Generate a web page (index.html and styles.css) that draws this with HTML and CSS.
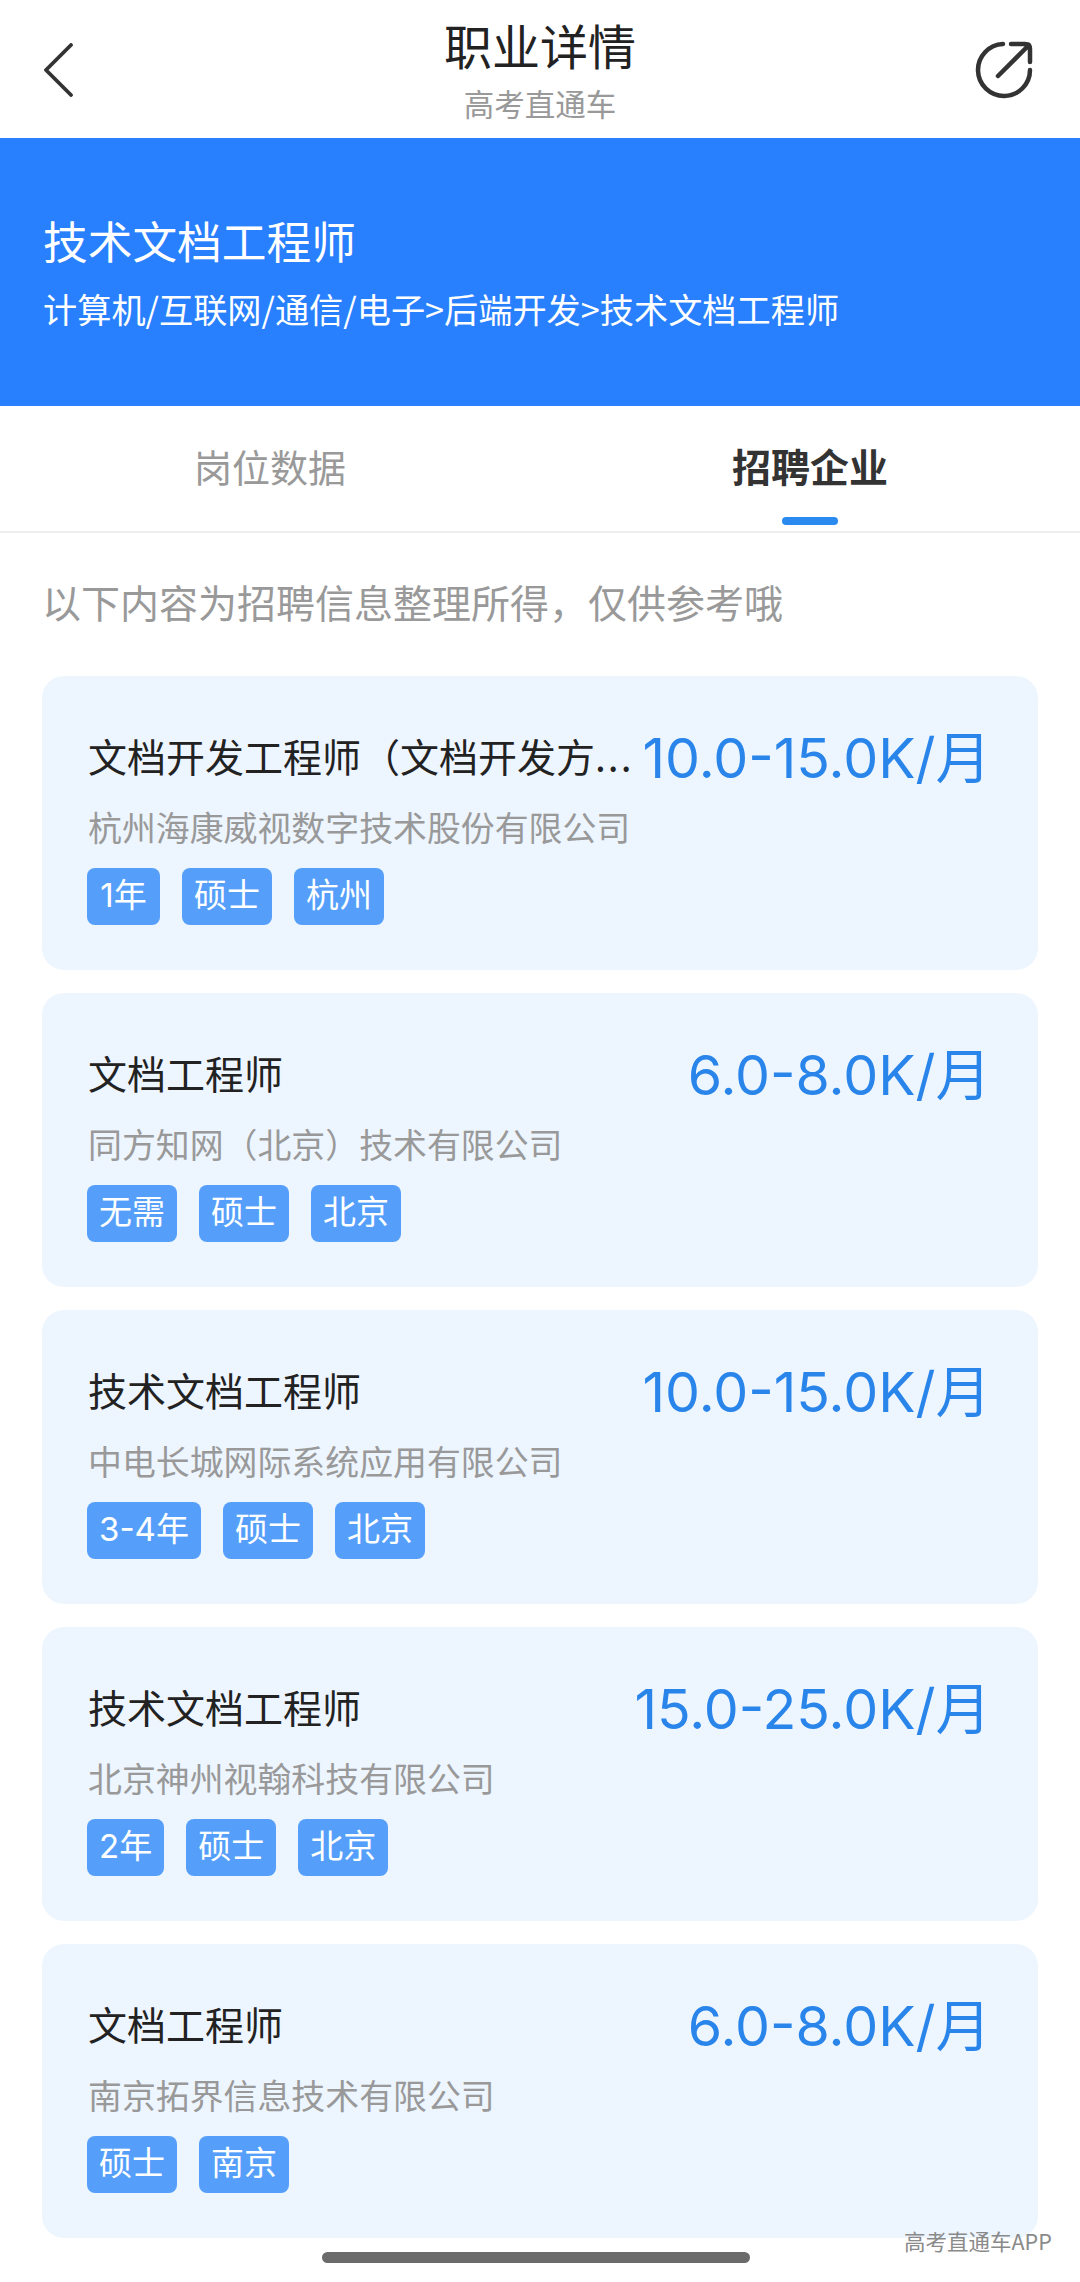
FILE: index.html
```html
<!DOCTYPE html>
<html lang="zh-CN">
<head>
<meta charset="utf-8">
<title>职业详情</title>
<link rel="stylesheet" href="styles.css">
</head>
<body>
<div class="page">
  <header class="nav">
    <svg class="nav-back" width="30" height="54" viewBox="0 0 30 54"><path d="M27 2 2 27l25 25" fill="none" stroke="#333" stroke-width="3.800" stroke-linecap="round" stroke-linejoin="round"/></svg>
    <div class="nav-titles">
      <div class="nav-title">职业详情</div>
      <div class="nav-sub">高考直通车</div>
    </div>
    <svg class="nav-share" width="58" height="58" viewBox="0 0 58 58"><path d="M28 3A26 26 0 1 0 55 29M36 3h14q5 0 5 5v13M54 4 23 35" fill="none" stroke="#333" stroke-width="4.500" stroke-linecap="round" stroke-linejoin="round"/></svg>
  </header>
  <section class="banner">
    <h1 class="banner-title">技术文档工程师</h1>
    <div class="banner-path">计算机/互联网/通信/电子&gt;后端开发&gt;技术文档工程师</div>
  </section>
  <nav class="tabs">
    <div class="tab">岗位数据</div>
    <div class="tab tab-active">招聘企业</div>
  </nav>
  <p class="intro">以下内容为招聘信息整理所得，仅供参考哦</p>
  <main class="list">
    <article class="card">
      <div class="card-head"><div class="job">文档开发工程师（文档开发方<span class="job-dots">...</span></div><div class="price">10.0-15.0K/月</div></div>
      <div class="company">杭州海康威视数字技术股份有限公司</div>
      <div class="tags"><span class="tag">1年</span><span class="tag">硕士</span><span class="tag">杭州</span></div>
    </article>
    <article class="card">
      <div class="card-head"><div class="job">文档工程师</div><div class="price">6.0-8.0K/月</div></div>
      <div class="company">同方知网（北京）技术有限公司</div>
      <div class="tags"><span class="tag">无需</span><span class="tag">硕士</span><span class="tag">北京</span></div>
    </article>
    <article class="card">
      <div class="card-head"><div class="job">技术文档工程师</div><div class="price">10.0-15.0K/月</div></div>
      <div class="company">中电长城网际系统应用有限公司</div>
      <div class="tags"><span class="tag">3-4年</span><span class="tag">硕士</span><span class="tag">北京</span></div>
    </article>
    <article class="card">
      <div class="card-head"><div class="job">技术文档工程师</div><div class="price">15.0-25.0K/月</div></div>
      <div class="company">北京神州视翰科技有限公司</div>
      <div class="tags"><span class="tag">2年</span><span class="tag">硕士</span><span class="tag">北京</span></div>
    </article>
    <article class="card">
      <div class="card-head"><div class="job">文档工程师</div><div class="price">6.0-8.0K/月</div></div>
      <div class="company">南京拓界信息技术有限公司</div>
      <div class="tags"><span class="tag">硕士</span><span class="tag">南京</span></div>
    </article>
  </main>
  <div class="home-bar"></div>
  <div class="watermark">高考直通车APP</div>
</div>
</body>
</html>
```
FILE: styles.css
```css
* { box-sizing: border-box; }
html, body { margin: 0; padding: 0; background: #fff; }
body { font-family: "Noto Sans CJK SC", "Noto Sans", sans-serif; }
.page { position: relative; width: 1080px; height: 2282px; overflow: hidden; background: #fff; }

.nav { height: 138px; display: grid; grid-template-columns: 1fr auto 1fr; align-items: start; padding: 0 47px; }
.nav-back { margin: 43px 0 0 -3px; }
.nav-share { margin-top: 41px; justify-self: end; }
.nav-titles { display: flex; flex-direction: column; align-items: center; padding-top: 13px; }
.nav-title { font-size: 48px; line-height: 62px; color: #222; }
.nav-sub { font-size: 30.500px; line-height: 42px; color: #999; margin-top: 7px; }

.banner { height: 268px; background: #2880fe; padding: 71px 43px 0; color: #fff; }
.banner-title { margin: 0; font-size: 44.700px; font-weight: 400; line-height: 62px; }
.banner-path { font-size: 34.200px; line-height: 48px; margin-top: 13px; }

.tabs { height: 127px; display: grid; grid-template-columns: 1fr 1fr; border-bottom: 2px solid #eee; }
.tab { position: relative; text-align: center; font-size: 38px; line-height: 54px; padding-top: 33px; color: #999; }
.tab-active { color: #333; font-weight: 700; font-size: 39px; padding-top: 32px; }
.tab-active::after { content: ""; position: absolute; left: 242px; top: 111px; width: 56px; height: 8px; border-radius: 4px; background: #2a8af0; }

.intro { margin: 0; padding: 41px 42px 0; font-size: 39px; line-height: 54px; color: #999; height: 143px; }

.list { display: flex; flex-direction: column; gap: 23px; padding: 0 42px; }
.card { height: 294px; background: #edf5ff; border-radius: 22px; padding: 46px 47px 0 46px; }
.card-head { display: flex; justify-content: space-between; align-items: center; height: 66px; }
.job { font-size: 39px; line-height: 56px; color: #222; white-space: nowrap; }
.job-dots { letter-spacing: 2px; }
.price { font-size: 55.500px; line-height: 66px; color: #2a85ea; white-space: nowrap; font-family: "Inter", "Noto Sans CJK SC", sans-serif; position: relative; top: 3px; }
.company { font-size: 33.900px; line-height: 48px; color: #999; margin-top: 15px; white-space: nowrap; }
.tags { display: flex; gap: 22px; margin: 17px 0 0 -1px; }
.tag { min-width: 73px; height: 57px; line-height: 54px; padding: 0 12px; border-radius: 8px; background: #559ffb; color: #fff; font-size: 33px; text-align: center; white-space: nowrap; font-family: "Inter", "Noto Sans CJK SC", sans-serif; }

.home-bar { position: absolute; left: 322px; top: 2252px; width: 428px; height: 11px; border-radius: 6px; background: #6b6b6b; }
.watermark { position: absolute; left: 904px; top: 2226px; font-size: 21.500px; line-height: 30px; color: #8a8a8a; white-space: nowrap; }
```
